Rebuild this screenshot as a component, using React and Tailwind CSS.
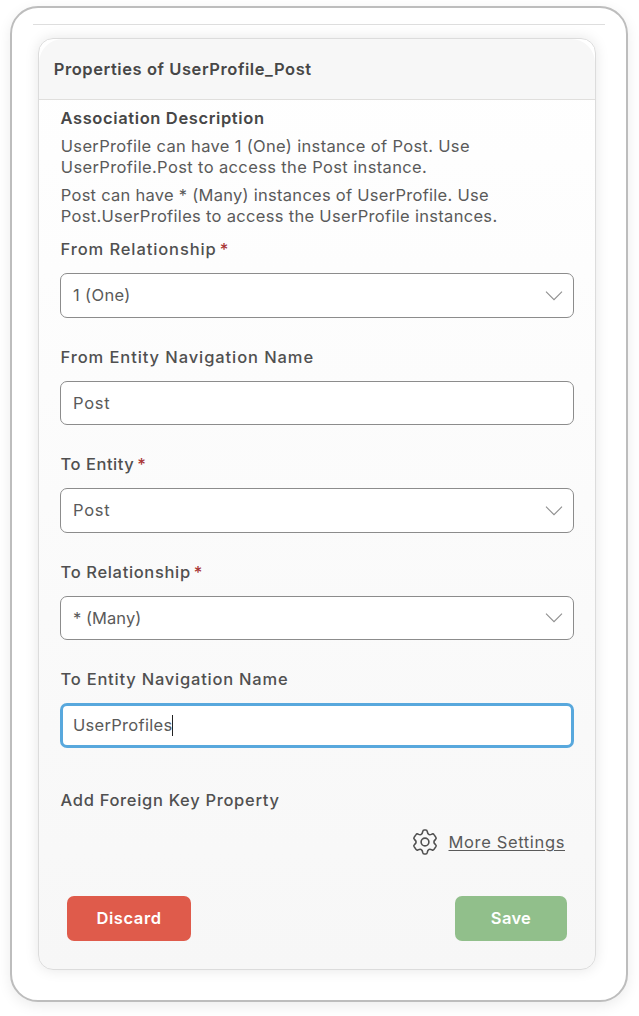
function Chevron() {
  return (
    <svg className="h-[10px] w-[18px] shrink-0" viewBox="0 0 18 10" fill="none" stroke="#8f8f8f" strokeWidth="1.1">
      <path d="M1 0.7 9 8.7 17 0.7" />
    </svg>
  );
}

function Gear() {
  return (
    <svg className="h-[26px] w-[26px] shrink-0" viewBox="0 0 26 26" fill="none" stroke="#505050" strokeWidth="1.6" strokeLinejoin="round">
      <path d="M10.7 2.6 Q11 1 12.2 1 H13.8 Q15 1 15.3 2.6 Q15.6 5 17 5.6 Q18.2 6 20 5.1 Q21.3 4.5 22 5.6 L23.9 8.4 Q24.6 9.6 23.5 10.5 Q21.9 11.7 21.9 13 Q21.9 14.3 23.5 15.5 Q24.6 16.4 23.9 17.6 L22 20.4 Q21.3 21.5 20 20.9 Q18.2 20 17 20.4 Q15.6 21 15.3 23.4 Q15 25 13.8 25 H12.2 Q11 25 10.7 23.4 Q10.4 21 9 20.4 Q7.8 20 6 20.9 Q4.7 21.5 4 20.4 L2.1 17.6 Q1.4 16.4 2.5 15.5 Q4.1 14.3 4.1 13 Q4.1 11.7 2.5 10.5 Q1.4 9.6 2.1 8.4 L4 5.6 Q4.7 4.5 6 5.1 Q7.8 6 9 5.6 Q10.4 5 10.7 2.6 Z" />
      <circle cx="13" cy="13" r="3.9" />
    </svg>
  );
}

function Field({ label, labelClass, required, value, valueClass, select, focused }) {
  return (
    <div className="mb-[28.25px]">
      <div className="flex h-[22px] items-center pl-[0.5px] font-medium text-[#505050]">
        <span className={labelClass}>{label}</span>
        {required && <span className="ml-[3px] text-[#a93535]">*</span>}
      </div>
      <div
        className={
          "mt-[12.75px] flex h-[44.5px] items-center justify-between rounded-[7px] bg-white pr-[10px] text-[#5a5a5a] " +
          (focused ? "border-3 border-[#58a8dd] pl-[10px]" : "border border-[#8c8c8c] pl-[12px]")
        }
      >
        <span className="flex items-center pt-[0.75px]">
          <span className={valueClass}>{value}</span>
          {focused && <span className="-ml-[0.5px] h-[21px] w-px bg-[#222]" />}
        </span>
        {select && <Chevron />}
      </div>
    </div>
  );
}

export default function App() {
  return (
    <div className="h-[1016px] w-[639px] bg-white pt-[6px] pl-[10px] font-[Inter,sans-serif] text-[16.5px] leading-[21px]">
      <div className="h-[996px] w-[618px] rounded-[28px] border-2 border-[#bdbdbd] bg-white px-[21px] pt-4 shadow-[0_4px_14px_rgba(0,0,0,0.08)]">
        <div className="h-px bg-[#dedede]" />
        <div className="mt-[13px] ml-[5px] flex h-[932px] w-[558px] flex-col rounded-[15px] border border-[#dcdcdc] bg-linear-to-b from-white to-[#f7f7f7] shadow-[0_0_14px_rgba(0,0,0,0.10)]">
          <div className="flex h-[61px] shrink-0 items-center rounded-t-[24px] border-b border-[#e0dfdd] bg-[#f7f7f7] pl-[14.75px] font-semibold text-[#474747]">
            <h1 className="tracking-[0.57px]">Properties of UserProfile_Post</h1>
          </div>
          <div className="px-[21px] pt-2">
            <h2 className="pl-[0.5px] font-semibold tracking-[0.62px] text-[#474747]">Association Description</h2>
            <p className="mt-[7px] pl-[0.75px] whitespace-nowrap text-[#5a5a5a]">
              <span className="tracking-[0.33px]">UserProfile can have 1 (One) instance of Post. Use</span>
              <br />
              <span className="tracking-[0.37px]">UserProfile.Post to access the Post instance.</span>
            </p>
            <p className="mt-[7px] mb-[11.5px] pl-[0.75px] whitespace-nowrap text-[#5a5a5a]">
              <span className="tracking-[0.27px]">Post can have * (Many) instances of UserProfile. Use</span>
              <br />
              <span className="tracking-[0.31px]">Post.UserProfiles to access the UserProfile instances.</span>
            </p>
            <Field label="From Relationship" labelClass="tracking-[0.9px]" required value="1 (One)" valueClass="tracking-[0.35px]" select />
            <Field label="From Entity Navigation Name" labelClass="tracking-[0.91px]" value="Post" valueClass="tracking-[0.75px]" />
            <Field label="To Entity" labelClass="tracking-[0.54px]" required value="Post" valueClass="tracking-[0.75px]" select />
            <Field label="To Relationship" labelClass="tracking-[0.66px]" required value="* (Many)" valueClass="tracking-[0.05px]" select />
            <Field label="To Entity Navigation Name" labelClass="tracking-[0.78px]" value="UserProfiles" valueClass="tracking-[0.3px]" focused />
            <div className="mt-[41.75px] flex pl-[0.5px] font-medium text-[#505050]">
              <span className="tracking-[0.69px]">Add Foreign Key Property</span>
            </div>
            <div className="mt-[17.5px] flex h-7 items-center justify-end gap-[11px] pr-[9px] text-[#5a5a5a]">
              <Gear />
              <span className="tracking-[0.64px] underline decoration-1 underline-offset-2">More Settings</span>
            </div>
            <div className="mt-[39.75px] flex justify-between pr-[7px] pl-[7px] font-semibold text-white">
              <button className="h-[45px] w-[124px] rounded-[7px] bg-[#df5b4b] tracking-[0.6px]">Discard</button>
              <button className="h-[45px] w-[112px] rounded-[7px] bg-[#91bf8b] tracking-[0.3px]">Save</button>
            </div>
          </div>
        </div>
      </div>
    </div>
  );
}
